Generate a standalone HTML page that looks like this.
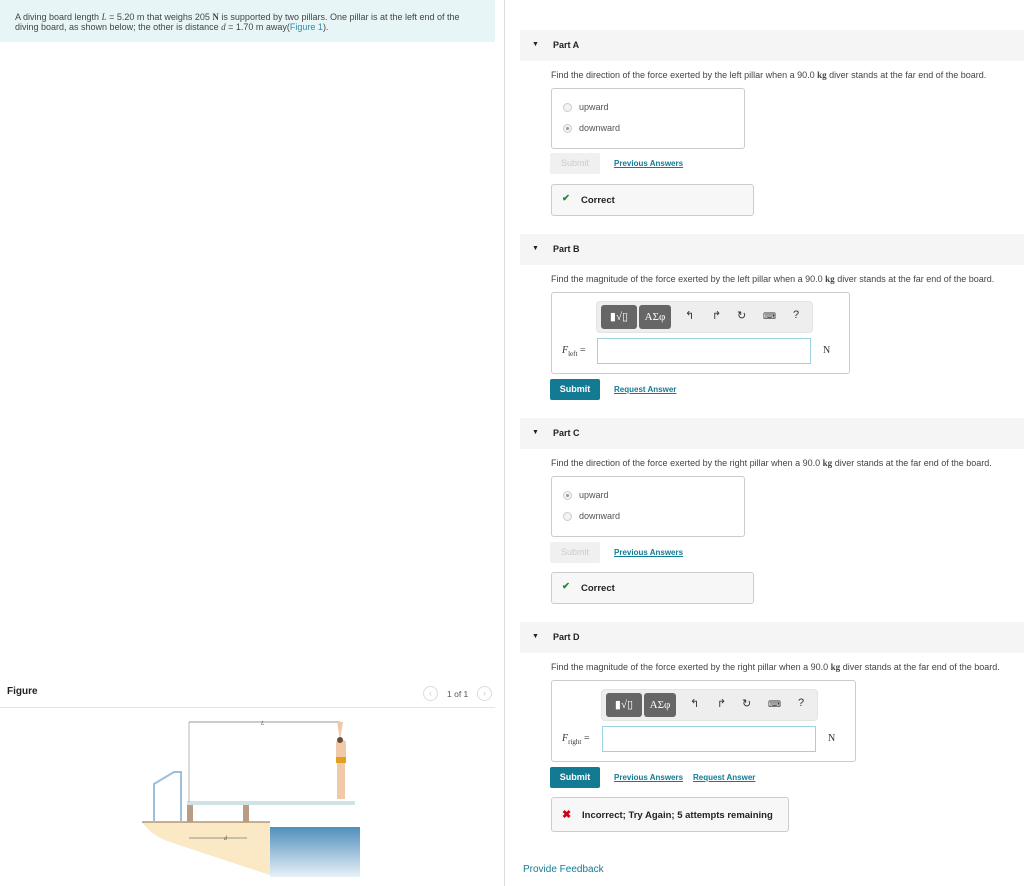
<!DOCTYPE html>
<html><head><meta charset="utf-8"><style>
*{box-sizing:border-box;margin:0;padding:0}
body{width:1024px;height:886px;position:relative;background:#fff;font-family:"Liberation Sans",Arial,sans-serif;color:#333;overflow:hidden;font-size:8px}
.a{position:absolute}
.hdr{position:absolute;left:520px;width:504px;height:31px;background:#f5f5f5;font-weight:bold;font-size:9px;color:#222}
.hdr span.t{position:absolute;left:12px;top:11px;font-size:7px}
.hdr span.n{position:absolute;left:33px;top:10px}
.q{position:absolute;left:551px;font-size:9px;color:#444;white-space:nowrap}
.box{position:absolute;border:1px solid #ccc;border-radius:3px;background:#fff}
.rad{position:absolute;width:9px;height:9px;border:1px solid #ccc;border-radius:50%;background:#f3f3f3}
.rad.on:after{content:"";position:absolute;left:2px;top:2px;width:3px;height:3px;border-radius:50%;background:#999}
.opt{position:absolute;font-size:9px;color:#555}
.sub{position:absolute;left:550px;width:50px;height:21px;font-size:9px;text-align:center;line-height:21px;border-radius:2px}
.dis{background:#f0f0f0;color:#ccc}
.en{background:#137a94;color:#fff;font-weight:bold}
.lnk{position:absolute;font-size:8px;color:#137a94;font-weight:bold;text-decoration:underline}
.fb{position:absolute;left:551px;border:1px solid #ccc;border-radius:3px;background:#f7f7f7;font-weight:bold;font-size:9.5px;color:#222}
.tb{position:absolute;background:#eee;border-radius:4px;border:1px solid #e4e4e4}
.db{position:absolute;top:3px;height:24px;background:#666;border-radius:3px;color:#fff;font-family:"Liberation Serif",serif;font-size:11px;line-height:24px;text-align:center}
.ic{position:absolute;top:7px;font-size:11px;color:#333}
.inp{position:absolute;border:1px solid #9dd2e0;background:#fff}
</style></head><body>
<div class="a" style="left:0;top:0;width:495px;height:42px;background:#e7f5f6"></div>
<div class="a" style="left:15px;top:12px;font-size:9px;color:#444;line-height:10px;width:462px">A diving board length <i style="font-family:'Liberation Serif',serif">L</i> = 5.20 m that weighs 205 <b style="font-family:'Liberation Serif',serif">N</b> is supported by two pillars. One pillar is at the left end of the diving board, as shown below; the other is distance <i style="font-family:'Liberation Serif',serif">d</i> = 1.70 m away(<span style="color:#2a8fb0">Figure 1</span>).</div>
<div class="a" style="left:504px;top:0;width:1px;height:886px;background:#ddd"></div>

<div class="a" style="left:7px;top:686px;font-weight:bold;font-size:10px;color:#222">Figure</div>
<div class="a" style="left:423px;top:686px;width:15px;height:15px;border:1px solid #ddd;border-radius:50%;color:#ccc;font-size:9px;text-align:center;line-height:13px">&lsaquo;</div>
<div class="a" style="left:447px;top:689px;font-size:8.5px;color:#555">1 of 1</div>
<div class="a" style="left:477px;top:686px;width:15px;height:15px;border:1px solid #ddd;border-radius:50%;color:#ccc;font-size:9px;text-align:center;line-height:13px">&rsaquo;</div>
<div class="a" style="left:0;top:707px;width:495px;height:1px;background:#e5e5e5"></div>

<svg class="a" style="left:140px;top:712px" width="220" height="165" viewBox="0 0 220 165">
<defs><linearGradient id="w" x1="0" y1="0" x2="0" y2="1"><stop offset="0" stop-color="#4f8fbc"/><stop offset="1" stop-color="#e8f1f8"/></linearGradient></defs>
<rect x="130" y="115" width="90" height="50" fill="url(#w)"/>
<path d="M2 110 L130 110 L130 163 C90 150 60 140 30 130 C15 125 8 118 2 110Z" fill="#fbe8c4"/>
<line x1="2" y1="110" x2="130" y2="110" stroke="#8a6a4a" stroke-width="1"/>
<path d="M14 110 V72 L34 60 H41 V110" fill="none" stroke="#9cc0dc" stroke-width="2"/>
<rect x="47" y="92" width="6" height="18" fill="#b99c86"/>
<rect x="103" y="92" width="6" height="18" fill="#b99c86"/>
<rect x="47" y="89" width="168" height="4" fill="#cfe3e6"/>
<line x1="49" y1="10" x2="49" y2="90" stroke="#999" stroke-width="0.7"/>
<line x1="49" y1="10" x2="200" y2="10" stroke="#777" stroke-width="0.7"/>
<text x="121" y="13" font-size="6" font-style="italic" fill="#555" font-family="Liberation Serif">L</text>
<line x1="49" y1="126" x2="107" y2="126" stroke="#777" stroke-width="0.7"/>
<text x="84" y="128" font-size="6" font-style="italic" fill="#555" font-family="Liberation Serif">d</text>
<path d="M197 10 L200 28 L203 10 Z" fill="#f0c9a8"/>
<rect x="196" y="28" width="10" height="22" rx="3" fill="#f0c9a8"/>
<rect x="196" y="45" width="10" height="6" fill="#e0a020"/>
<rect x="197" y="51" width="8" height="36" fill="#f0c9a8"/>
<circle cx="200" cy="28" r="3" fill="#6a4a3a"/>
</svg>

<!-- Part A -->
<div class="hdr" style="top:30px"><span class="t">▼</span><span class="n">Part A</span></div>
<div class="q" style="top:70px">Find the direction of the force exerted by the left pillar when a 90.0 <b style="font-family:'Liberation Serif',serif">kg</b> diver stands at the far end of the board.</div>
<div class="box" style="left:551px;top:88px;width:194px;height:61px"></div>
<div class="rad" style="left:563px;top:103px"></div><div class="opt" style="left:579px;top:102px">upward</div>
<div class="rad on" style="left:563px;top:124px"></div><div class="opt" style="left:579px;top:123px">downward</div>
<div class="sub dis" style="top:153px">Submit</div>
<div class="lnk" style="left:614px;top:159px">Previous Answers</div>
<div class="fb" style="top:184px;width:203px;height:32px"><span style="position:absolute;left:10px;top:8px;color:#1d8a3a">✔</span><span style="position:absolute;left:29px;top:10px">Correct</span></div>

<!-- Part B -->
<div class="hdr" style="top:234px"><span class="t">▼</span><span class="n">Part B</span></div>
<div class="q" style="top:274px">Find the magnitude of the force exerted by the left pillar when a 90.0 <b style="font-family:'Liberation Serif',serif">kg</b> diver stands at the far end of the board.</div>
<div class="box" style="left:551px;top:292px;width:299px;height:82px"></div>
<div class="tb" style="left:596px;top:301px;width:217px;height:32px">
<div class="db" style="left:4px;width:36px">▮√▯</div><div class="db" style="left:42px;width:32px">ΑΣφ</div>
<div class="ic" style="left:88px">↰</div><div class="ic" style="left:115px">↱</div><div class="ic" style="left:140px">↻</div><div class="ic" style="left:166px;font-size:9px;top:9px">⌨</div><div class="ic" style="left:196px">?</div></div>
<div class="a" style="left:562px;top:345px;font-family:'Liberation Serif',serif;font-size:10px"><i>F</i><sub style="font-size:7px">left</sub> =</div>
<div class="inp" style="left:597px;top:338px;width:214px;height:26px"></div>
<div class="a" style="left:823px;top:345px;font-family:'Liberation Serif',serif;font-size:10px">N</div>
<div class="sub en" style="top:379px">Submit</div>
<div class="lnk" style="left:614px;top:385px">Request Answer</div>

<!-- Part C -->
<div class="hdr" style="top:418px"><span class="t">▼</span><span class="n">Part C</span></div>
<div class="q" style="top:458px">Find the direction of the force exerted by the right pillar when a 90.0 <b style="font-family:'Liberation Serif',serif">kg</b> diver stands at the far end of the board.</div>
<div class="box" style="left:551px;top:476px;width:194px;height:61px"></div>
<div class="rad on" style="left:563px;top:491px"></div><div class="opt" style="left:579px;top:490px">upward</div>
<div class="rad" style="left:563px;top:512px"></div><div class="opt" style="left:579px;top:511px">downward</div>
<div class="sub dis" style="top:542px">Submit</div>
<div class="lnk" style="left:614px;top:548px">Previous Answers</div>
<div class="fb" style="top:572px;width:203px;height:32px"><span style="position:absolute;left:10px;top:8px;color:#1d8a3a">✔</span><span style="position:absolute;left:29px;top:10px">Correct</span></div>

<!-- Part D -->
<div class="hdr" style="top:622px"><span class="t">▼</span><span class="n">Part D</span></div>
<div class="q" style="top:662px">Find the magnitude of the force exerted by the right pillar when a 90.0 <b style="font-family:'Liberation Serif',serif">kg</b> diver stands at the far end of the board.</div>
<div class="box" style="left:551px;top:680px;width:305px;height:82px"></div>
<div class="tb" style="left:601px;top:689px;width:217px;height:32px">
<div class="db" style="left:4px;width:36px">▮√▯</div><div class="db" style="left:42px;width:32px">ΑΣφ</div>
<div class="ic" style="left:88px">↰</div><div class="ic" style="left:115px">↱</div><div class="ic" style="left:140px">↻</div><div class="ic" style="left:166px;font-size:9px;top:9px">⌨</div><div class="ic" style="left:196px">?</div></div>
<div class="a" style="left:562px;top:733px;font-family:'Liberation Serif',serif;font-size:10px"><i>F</i><sub style="font-size:7px">right</sub> =</div>
<div class="inp" style="left:602px;top:726px;width:214px;height:26px"></div>
<div class="a" style="left:828px;top:733px;font-family:'Liberation Serif',serif;font-size:10px">N</div>
<div class="sub en" style="top:767px">Submit</div>
<div class="lnk" style="left:614px;top:773px">Previous Answers</div>
<div class="lnk" style="left:693px;top:773px">Request Answer</div>
<div class="fb" style="top:797px;width:238px;height:35px;font-size:9.5px"><span style="position:absolute;left:10px;top:10px;color:#d0021b;font-size:11px">✖</span><span style="position:absolute;left:30px;top:12px;white-space:nowrap">Incorrect; Try Again; 5 attempts remaining</span></div>

<div class="a" style="left:523px;top:864px;font-size:10px;color:#137a94">Provide Feedback</div>
</body></html>
